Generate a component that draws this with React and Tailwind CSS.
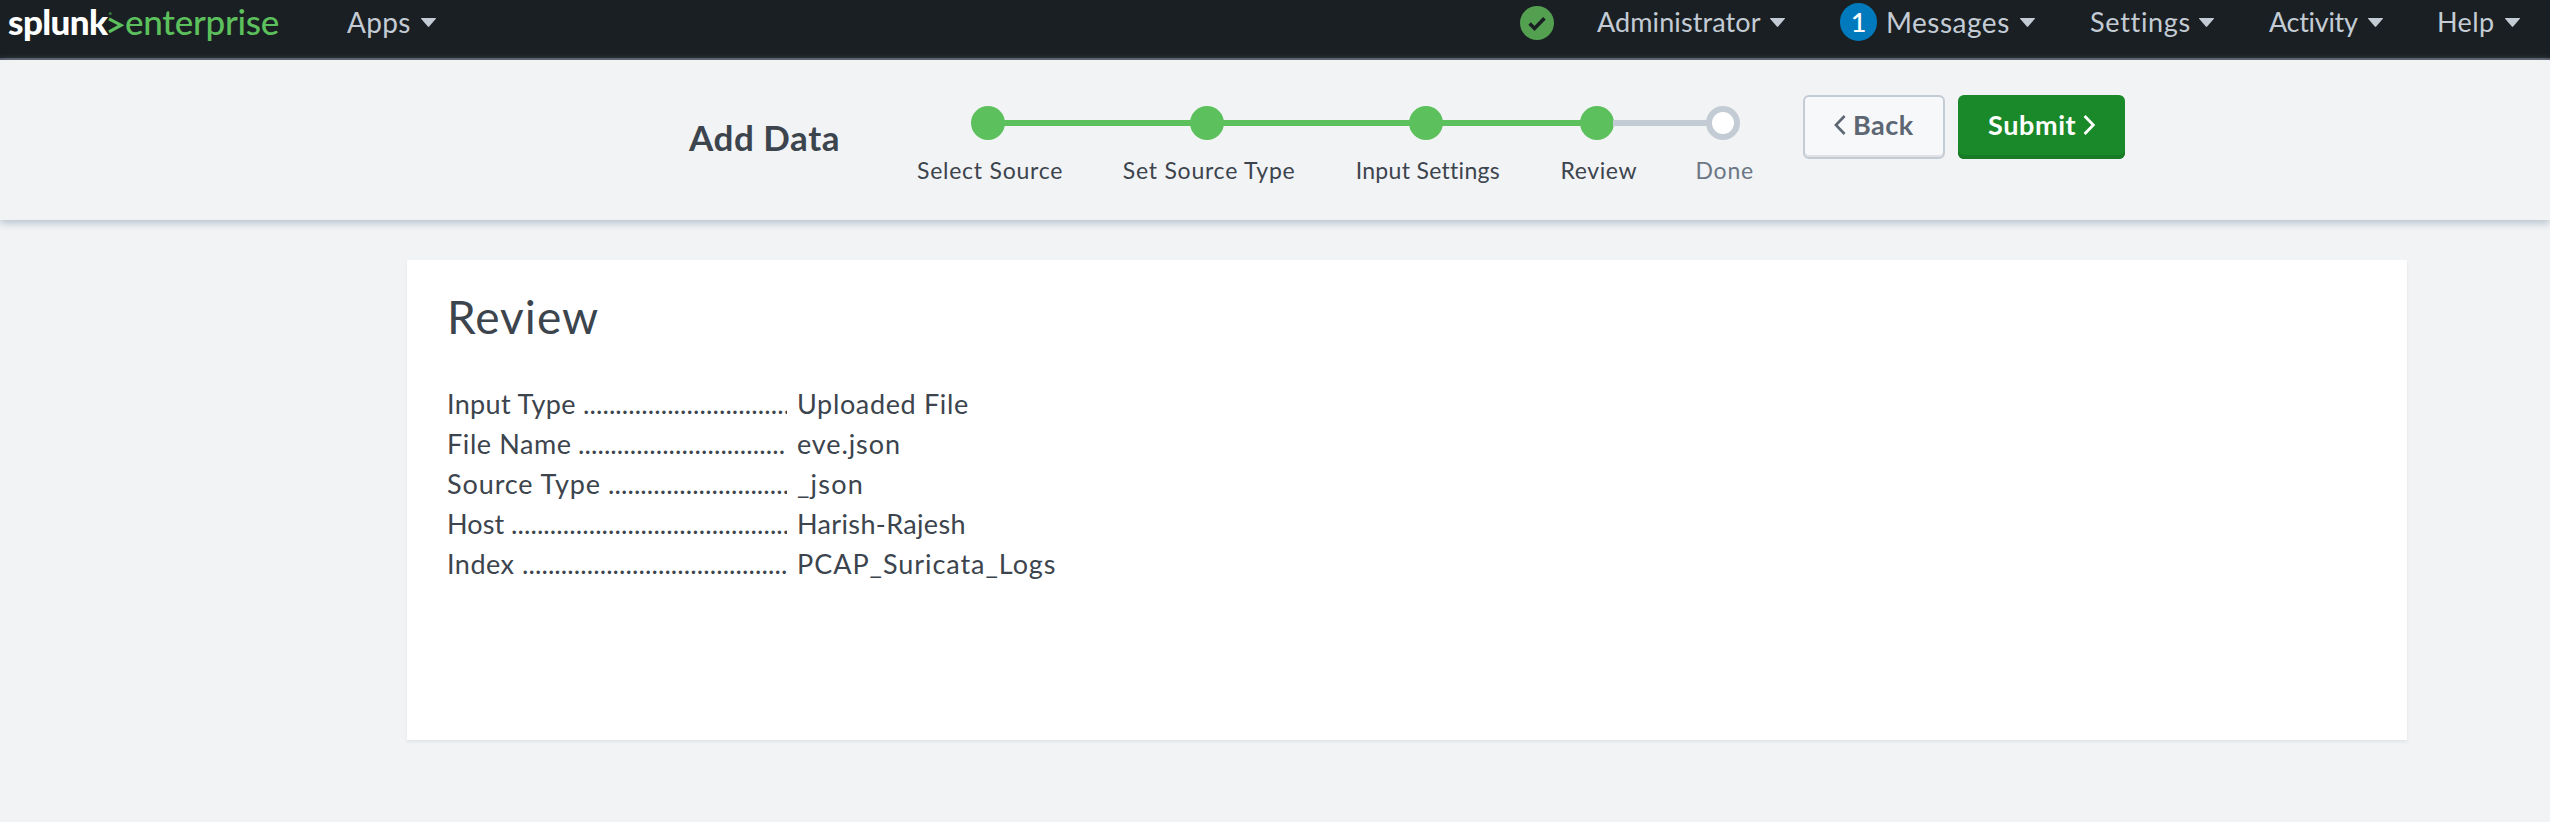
const Caret = ({ className = '' }) => (
  <svg className={`shrink-0 ${className}`} width="15" height="9" viewBox="0 0 14 9" preserveAspectRatio="none" fill="#c3cbd4">
    <path d="M0.4 0h13.2a.4.4 0 0 1 .3.7L7.6 8.6a.8.8 0 0 1-1.2 0L.1.7A.4.4 0 0 1 .4 0z" />
  </svg>
);

const NavItem = ({ label, className = '', textClass }) => (
  <a className={`flex h-[44px] items-center leading-[44px] text-[#c3cbd4] ${className}`}>
    <span className={`whitespace-nowrap ${textClass}`}>{label}</span>
    <Caret className="mt-[1px]" />
  </a>
);

function TopBar() {
  return (
    <nav className="flex h-[60px] items-start border-b-2 border-[#4a535e] bg-[#1a1f23]">
      <a className="flex h-[41px] w-[345px] shrink-0 items-start pl-[8px] text-[35px] leading-[42px]">
        <span className="w-[100px] font-black tracking-[-0.6px] text-white">splunk</span>
        <svg className="shrink-0" width="17" height="41" viewBox="0 0 17 41" fill="none">
          <path d="M1 18.8L13 25.2L1 31.8" stroke="#5cc05c" strokeWidth="3.2" />
          <circle cx="2.2" cy="13.6" r="1.6" fill="#35733a" />
        </svg>
        <span className="font-medium tracking-[-0.25px] text-[#5cc05c]">enterprise</span>
      </a>
      <NavItem label="Apps" className="pl-[2px]" textClass="w-[74px] text-[28px] tracking-[0.3px]" />
      <div className="ml-auto flex items-start">
        <svg className="mt-[6px] mr-[43px]" width="34" height="34" viewBox="0 0 34 34">
          <circle cx="17" cy="17" r="17" fill="#53a051" />
          <path d="M9.6 17.6l4.9 4.9L24.4 12.2" fill="none" stroke="#1a1f23" strokeWidth="3.6" />
        </svg>
        <NavItem label="Administrator" textClass="w-[173px] text-[27px] tracking-[0.1px]" />
        <span className="mt-[3px] ml-[55px] flex h-[38px] w-[37px] items-center justify-center rounded-full bg-[#007abd] text-[27px] leading-[38px] font-medium text-white">
          1
        </span>
        <NavItem label="Messages" className="ml-[9px]" textClass="w-[134px] text-[28px] tracking-[0.5px]" />
        <NavItem label="Settings" className="ml-[55px]" textClass="w-[109px] text-[27px] tracking-[0.7px] [font-variant-ligatures:none]" />
        <NavItem label="Activity" className="ml-[55px]" textClass="w-[99px] text-[27px] tracking-[-0.3px] [font-variant-ligatures:none]" />
        <NavItem label="Help" className="ml-[54px] mr-[30px]" textClass="w-[68px] text-[27px] tracking-[0.4px]" />
      </div>
    </nav>
  );
}

const Dot = () => <span className="size-[34px] shrink-0 rounded-full bg-[#5cc05c]" />;
const Line = ({ className }) => <span className={`-mx-px h-[6px] shrink-0 ${className}`} />;

function Stepper() {
  return (
    <div className="mt-[46px] ml-[78px] w-[837px] shrink-0">
      <div className="flex items-center pl-[54px]">
        <Dot />
        <Line className="w-[187px] bg-[#5cc05c]" />
        <Dot />
        <Line className="w-[187px] bg-[#5cc05c]" />
        <Dot />
        <Line className="w-[139px] bg-[#5cc05c]" />
        <Dot />
        <Line className="w-[94px] bg-[#c3cbd4]" />
        <span className="size-[34px] shrink-0 rounded-full border-[6px] border-[#c3cbd4] bg-white" />
      </div>
      <div className="mt-[16px] flex text-[23px] leading-[28px] whitespace-nowrap text-[#3c444d] [font-variant-ligatures:none]">
        <span className="w-[206px] tracking-[0.75px]">Select Source</span>
        <span className="w-[233px] tracking-[0.75px]">Set Source Type</span>
        <span className="w-[205px] tracking-[0.3px]">Input Settings</span>
        <span className="w-[135px] tracking-[0.6px]">Review</span>
        <span className="tracking-[0.8px] text-[#6b7785]">Done</span>
      </div>
    </div>
  );
}

function WizardHeader() {
  return (
    <header className="relative flex h-[160px] items-start bg-[#f2f3f5] pl-[689px] shadow-[0_3px_8px_#b4c0cc]">
      <h1 className="mt-[57px] w-[150px] shrink-0 text-[35px] leading-[40px] font-bold tracking-[0.55px] whitespace-nowrap text-[#3c444d]">
        Add Data
      </h1>
      <Stepper />
      <button className="mt-[35px] ml-[49px] flex h-[64px] w-[142px] shrink-0 items-center rounded-[6px] border-2 border-[#c3cbd4] bg-[#f7f8fa] pb-[4px] pl-[29px] text-[27px] font-bold tracking-[0.5px] text-[#5c6773] shadow-[inset_0_-2px_0_#dfe1e4]">
        <svg className="mr-[7px]" width="12" height="20" viewBox="0 0 12 20" fill="none" stroke="#5c6773" strokeWidth="2.6">
          <path d="M10.6 1L1.9 10l8.7 9" />
        </svg>
        Back
      </button>
      <button className="mt-[35px] ml-[13px] flex h-[64px] w-[167px] shrink-0 items-center rounded-[6px] bg-[#1a8929] pb-[4px] pl-[30px] text-[27px] font-bold tracking-[0.6px] text-white shadow-[inset_0_-4px_0_#187b25]">
        <span className="w-[95px] text-left">Submit</span>
        <svg width="13" height="20" viewBox="0 0 13 20" fill="none" stroke="#ffffff" strokeWidth="2.8">
          <path d="M1.6 1l8.7 9l-8.7 9" />
        </svg>
      </button>
    </header>
  );
}

const ROWS = [
  { label: 'Input Type', value: 'Uploaded File', dots: 32, l: 'w-[136px] tracking-[0.35px]', v: 'tracking-[0.65px]' },
  { label: 'File Name', value: 'eve.json', dots: 32, l: 'w-[131px] tracking-[0.6px]', v: 'tracking-[0.9px]' },
  { label: 'Source Type', value: '_json', dots: 28, l: 'w-[161px] tracking-[0.9px]', v: 'tracking-[1.2px]' },
  { label: 'Host', value: 'Harish-Rajesh', dots: 43, l: 'w-[64px] tracking-[0.1px]', v: 'tracking-[0.35px]' },
  { label: 'Index', value: 'PCAP_Suricata_Logs', dots: 41, l: 'w-[75px] tracking-[0.5px]', v: 'tracking-[0.95px]' },
];

export default function App() {
  return (
    <div className="h-[822px] w-full overflow-hidden bg-[#f2f3f5] font-['Lato',sans-serif]">
      <TopBar />
      <WizardHeader />
      <main className="mt-[40px] ml-[407px] h-[480px] w-[2000px] bg-white pl-[40px] shadow-[0_2px_3px_#dfe4e9]">
        <h2 className="pt-[29px] text-[46px] leading-[56px] tracking-[1px] text-[#3c444d]">Review</h2>
        <dl className="mt-[39px] text-[27px] leading-[40px] text-[#3c444d]">
          {ROWS.map((r) => (
            <div key={r.label} className="flex h-[40px] whitespace-nowrap">
              <dt className="flex w-[340px] overflow-hidden">
                <span className={`shrink-0 ${r.l}`}>{r.label}</span>
                <span className="overflow-hidden tracking-[0.1px]">{'.'.repeat(r.dots)}</span>
              </dt>
              <dd className={`pl-[10px] ${r.v}`}>{r.value}</dd>
            </div>
          ))}
        </dl>
      </main>
    </div>
  );
}
